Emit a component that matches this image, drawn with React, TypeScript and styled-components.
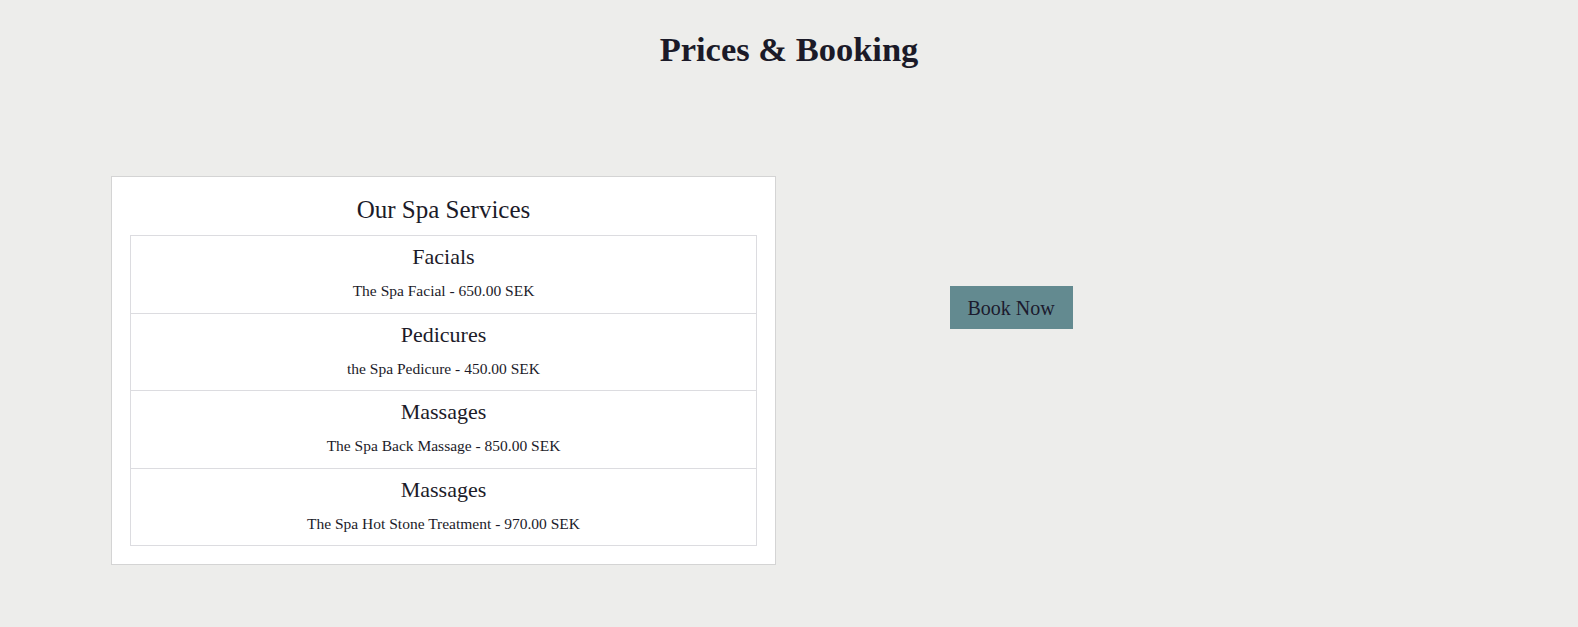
import React from "react";
import styled, { createGlobalStyle } from "styled-components";

const Global = createGlobalStyle`
  html, body { margin: 0; padding: 0; background: #ededeb; }
  body { font-family: "Liberation Serif", "DejaVu Serif", serif; color: #1c1b29; }
`;

const Page = styled.div`
  padding-top: 27px;
  min-height: 627px;
  box-sizing: border-box;
`;

const Heading = styled.h1`
  margin: 0;
  text-align: center;
  font-size: 34.5px;
  line-height: 44px;
  font-weight: 700;
  color: #1b1a28;
`;

const Row = styled.div`
  display: flex;
  align-items: flex-start;
  margin-top: 105px;
  padding-left: 111px;
`;

const Card = styled.section`
  width: 665px;
  box-sizing: border-box;
  background: #ffffff;
  border: 1px solid #d4d4d4;
  padding: 18px 18px 18px;
`;

const CardTitle = styled.h2`
  margin: 0 0 11px;
  text-align: center;
  font-size: 25px;
  line-height: 29px;
  font-weight: 400;
`;

const List = styled.ul`
  list-style: none;
  margin: 0;
  padding: 0;
  border: 1px solid #dcdce0;
`;

const Item = styled.li`
  text-align: center;
  padding: 8px 0 11.5px;
  & + & { border-top: 1px solid #dcdce0; }
`;

const ItemTitle = styled.h3`
  margin: 0 0 11px;
  font-size: 22px;
  line-height: 26px;
  font-weight: 400;
`;

const ItemText = styled.p`
  margin: 0;
  font-size: 15.5px;
  line-height: 20px;
`;

const Side = styled.div`
  flex: 0 0 470px;
  display: flex;
  justify-content: center;
  padding-top: 110px;
`;

const BookButton = styled.button`
  width: 123px;
  height: 43px;
  border: none;
  background: #638a90;
  color: #1c1b2e;
  font-family: "Liberation Serif", "DejaVu Serif", serif;
  font-size: 20px;
  font-weight: 400;
  padding: 2px 0 0;
  cursor: pointer;
`;

const services = [
  { title: "Facials", text: "The Spa Facial - 650.00 SEK" },
  { title: "Pedicures", text: "the Spa Pedicure - 450.00 SEK" },
  { title: "Massages", text: "The Spa Back Massage - 850.00 SEK" },
  { title: "Massages", text: "The Spa Hot Stone Treatment - 970.00 SEK" },
];

export default function App() {
  return (
    <>
      <Global />
      <Page>
        <Heading>Prices &amp; Booking</Heading>
        <Row>
          <Card>
            <CardTitle>Our Spa Services</CardTitle>
            <List>
              {services.map((s, i) => (
                <Item key={i}>
                  <ItemTitle>{s.title}</ItemTitle>
                  <ItemText>{s.text}</ItemText>
                </Item>
              ))}
            </List>
          </Card>
          <Side>
            <BookButton>Book Now</BookButton>
          </Side>
        </Row>
      </Page>
    </>
  );
}
